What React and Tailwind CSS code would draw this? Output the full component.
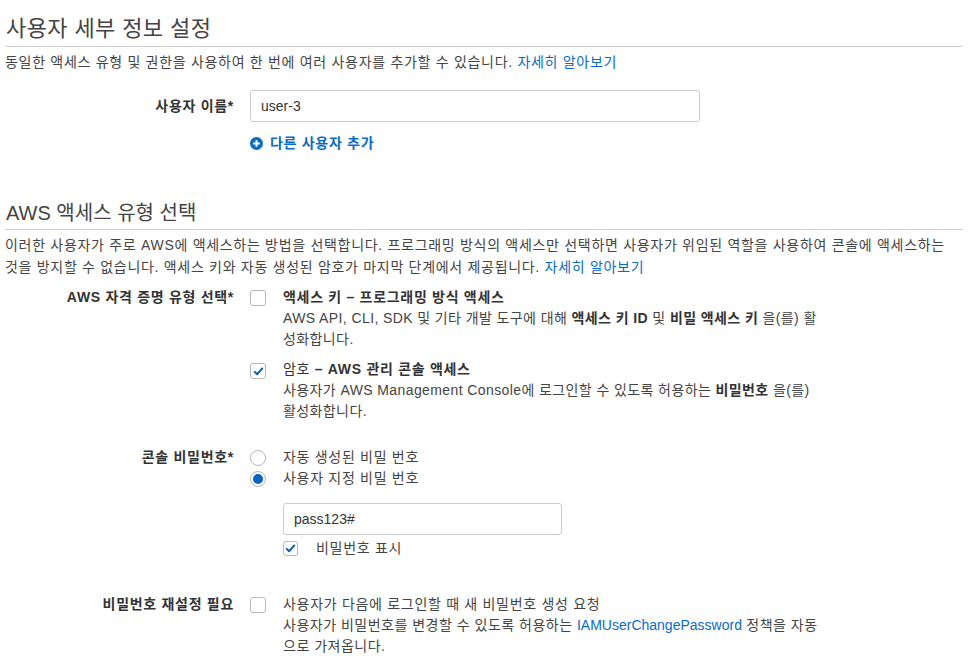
import { useState } from 'react'

const font = { fontFamily: '"Liberation Sans", "Noto Sans CJK KR", sans-serif' }

function Check({ checked, onChange, small }) {
  return (
    <button
      type="button"
      onClick={onChange}
      className={`flex shrink-0 items-center justify-center rounded-[3px] border border-[#b8b8b8] bg-white ${small ? 'h-[15px] w-[15px]' : 'h-4 w-4'}`}
    >
      {checked && (
        <svg viewBox="0 0 16 16" className="h-[11px] w-[11px]">
          <path d="M2.5 8.5 L6 12 L13.5 3.5" fill="none" stroke="#0a5fb8" strokeWidth="2.8" strokeLinecap="round" strokeLinejoin="round" />
        </svg>
      )}
    </button>
  )
}

function Radio({ checked, onChange }) {
  return (
    <button
      type="button"
      onClick={onChange}
      className="flex h-4 w-4 shrink-0 items-center justify-center rounded-full border border-[#b8b8b8] bg-white"
    >
      {checked && <span className="h-[10px] w-[10px] rounded-full bg-[#0a62c4]" />}
    </button>
  )
}

function Row({ label, children, className = '' }) {
  return (
    <div className={`grid grid-cols-[245px_1fr] ${className}`}>
      <div className="pr-[16px] text-right font-bold text-[#333]">{label}</div>
      <div>{children}</div>
    </div>
  )
}

export default function App() {
  const [userName, setUserName] = useState('user-3')
  const [accessKey, setAccessKey] = useState(false)
  const [consoleAccess, setConsoleAccess] = useState(true)
  const [pwMode, setPwMode] = useState('custom')
  const [password, setPassword] = useState('pass123#')
  const [showPw, setShowPw] = useState(true)
  const [resetPw, setResetPw] = useState(false)

  return (
    <div style={font} className="min-h-[669px] bg-white px-[5px] text-[14px] leading-[21px] tracking-[0.7px] text-[#444]">
      {/* 사용자 세부 정보 */}
      <h2 className="border-b border-[#d0d0d0] pt-[14px] pb-[2px] pl-[1px] text-[22px] leading-[30px] font-normal tracking-[0.4px] text-[#444]">
        사용자 세부 정보 설정
      </h2>
      <p className="mt-[4px] leading-[22px]">
        동일한 액세스 유형 및 권한을 사용하여 한 번에 여러 사용자를 추가할 수 있습니다.{' '}
        <a href="#" className="text-[#0a6bc4]">자세히 알아보기</a>
      </p>

      <Row label="사용자 이름*" className="mt-[17px] items-center">
        <input
          value={userName}
          onChange={(e) => setUserName(e.target.value)}
          className="h-[32px] w-[450px] rounded-[3px] border border-[#ccc] px-[10px] text-[14px] tracking-normal text-[#333] outline-none"
          style={font}
        />
      </Row>
      <Row label="" className="mt-[11px]">
        <a href="#" className="flex items-center gap-[7px] font-bold text-[#0a6bc4]">
          <svg viewBox="0 0 14 14" className="h-[13px] w-[13px]">
            <circle cx="7" cy="7" r="7" fill="#0a6bc4" />
            <path d="M7 3.5 V10.5 M3.5 7 H10.5" stroke="white" strokeWidth="2.2" />
          </svg>
          다른 사용자 추가
        </a>
      </Row>

      {/* AWS 액세스 유형 */}
      <h2 className="mt-[44px] border-b border-[#d0d0d0] pb-[1px] pl-[1px] text-[20px] leading-[30px] font-normal tracking-normal text-[#444]">
        AWS 액세스 유형 선택
      </h2>
      <p className="mt-[4px] leading-[22px]">
        이러한 사용자가 주로 AWS에 액세스하는 방법을 선택합니다. 프로그래밍 방식의 액세스만 선택하면 사용자가 위임된 역할을 사용하여 콘솔에 액세스하는
        <br />
        것을 방지할 수 없습니다. 액세스 키와 자동 생성된 암호가 마지막 단계에서 제공됩니다.{' '}
        <a href="#" className="text-[#0a6bc4]">자세히 알아보기</a>
      </p>

      <Row label="AWS 자격 증명 유형 선택*" className="mt-[9px]">
        <div className="flex gap-[17px]">
          <div className="mt-[3px]">
            <Check checked={accessKey} onChange={() => setAccessKey(!accessKey)} />
          </div>
          <div>
            <div className="font-bold text-[#333]">액세스 키 – 프로그래밍 방식 액세스</div>
            <div className="tracking-[0.4px]">
              AWS API, CLI, SDK 및 기타 개발 도구에 대해 <b className="text-[#333]">액세스 키 ID</b> 및{' '}
              <b className="text-[#333]">비밀 액세스 키</b> 을(를) 활
              <br />
              성화합니다.
            </div>
          </div>
        </div>
        <div className="mt-[9px] flex gap-[17px]">
          <div className="mt-[4px]">
            <Check checked={consoleAccess} onChange={() => setConsoleAccess(!consoleAccess)} />
          </div>
          <div>
            <div className="text-[#333]">
              암호 <b>– AWS 관리 콘솔 액세스</b>
            </div>
            <div className="tracking-[0.4px]">
              사용자가 AWS Management Console에 로그인할 수 있도록 허용하는 <b className="text-[#333]">비밀번호</b> 을(를)
              <br />
              활성화합니다.
            </div>
          </div>
        </div>
      </Row>

      <Row label="콘솔 비밀번호*" className="mt-[25px]">
        <label className="flex items-center gap-[17px]">
          <Radio checked={pwMode === 'auto'} onChange={() => setPwMode('auto')} />
          <span>자동 생성된 비밀 번호</span>
        </label>
        <label className="flex items-center gap-[17px]">
          <Radio checked={pwMode === 'custom'} onChange={() => setPwMode('custom')} />
          <span>사용자 지정 비밀 번호</span>
        </label>
        <div className="mt-[14px] pl-[33px]">
          <input
            type={showPw ? 'text' : 'password'}
            value={password}
            onChange={(e) => setPassword(e.target.value)}
            className="h-[32px] w-[279px] rounded-[3px] border border-[#ccc] px-[10px] text-[14px] tracking-normal text-[#333] outline-none"
            style={font}
          />
          <label className="mt-[3px] flex items-center gap-[18px]">
            <Check small checked={showPw} onChange={() => setShowPw(!showPw)} />
            <span>비밀번호 표시</span>
          </label>
        </div>
      </Row>

      <Row label="비밀번호 재설정 필요" className="mt-[35px]">
        <div className="flex gap-[17px]">
          <div className="mt-[3px]">
            <Check checked={resetPw} onChange={() => setResetPw(!resetPw)} />
          </div>
          <div>
            <div>사용자가 다음에 로그인할 때 새 비밀번호 생성 요청</div>
            <div className="tracking-[0.5px]">
              사용자가 비밀번호를 변경할 수 있도록 허용하는{' '}
              <a href="#" className="text-[#0a6bc4] tracking-normal">IAMUserChangePassword</a> 정책을 자동
              <br />
              으로 가져옵니다.
            </div>
          </div>
        </div>
      </Row>
    </div>
  )
}
